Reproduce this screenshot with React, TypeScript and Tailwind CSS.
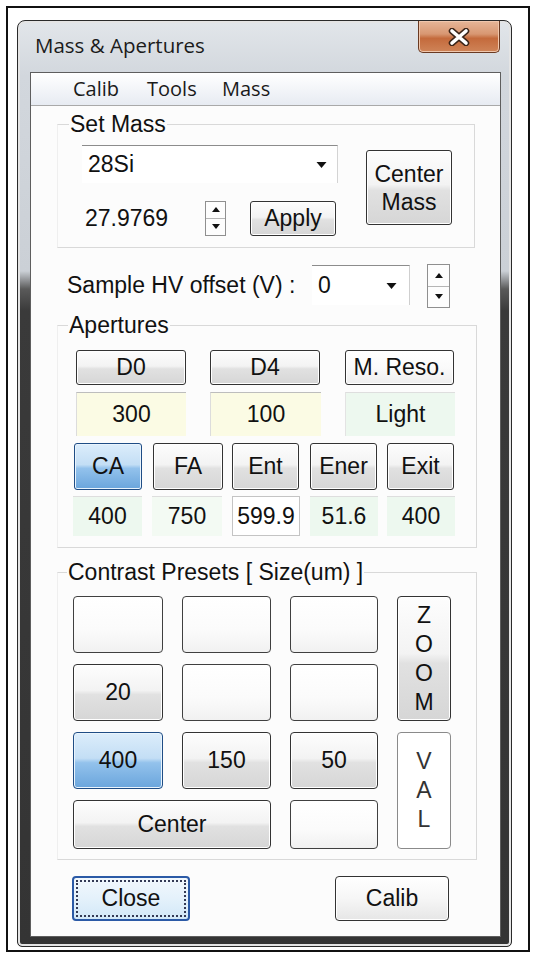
import React from "react";

function Tri({ up = false, w = 11, h = 6 }: { up?: boolean; w?: number; h?: number }) {
  return (
    <svg width={w} height={h} viewBox="0 0 10 6" className="block">
      <path d={up ? "M0 6 L5 0 L10 6Z" : "M0 0 L10 0 L5 6Z"} fill="#111" />
    </svg>
  );
}

function Spinner({ className }: { className: string }) {
  return (
    <div className={"flex flex-col border border-[#8f8f8f] bg-[#fdfdfd] " + className}>
      <div className="flex-1 flex items-center justify-center border-b border-[#b5b5b5]">
        <Tri up w={8} h={5} />
      </div>
      <div className="flex-1 flex items-center justify-center">
        <Tri w={8} h={5} />
      </div>
    </div>
  );
}

const btn =
  "flex items-center justify-center border border-[#333333] rounded-[3px] bg-[linear-gradient(to_bottom,#fdfdfd_0%,#f3f3f3_46%,#e1e1e1_54%,#d6d6d6_100%)] shadow-[inset_0_0_0_1px_#ffffff] text-[23px] text-[#111]";
const blueBtn =
  "flex items-center justify-center border border-[#1f4d85] rounded-[3px] bg-[linear-gradient(to_bottom,#dcedfb_0%,#c3def5_46%,#93c2ec_54%,#6aa5dc_100%)] shadow-[inset_0_0_0_1px_#e9f4fd] text-[23px] text-[#111]";
const emptyBox =
  "border border-[#404040] rounded-[4px] bg-[linear-gradient(to_bottom,#ffffff_0%,#fbfbfb_60%,#f1f1f1_100%)]";
const yellowCell =
  "flex items-center justify-center bg-[#fbfbe4] border-t border-[#bdbdbd] border-l border-l-[#dcdcdc] text-[23px]";
const greenCell =
  "flex items-center justify-center bg-[#edf8ef] border-t border-[#dedede] text-[23px]";
const greyBtn =
  " rounded-[4px] bg-[linear-gradient(to_bottom,#f8f8f8_0%,#efefef_45%,#dadada_55%,#d2d2d2_100%)]";

export default function App() {
  return (
    <div className="w-[535px] h-[960px] bg-white overflow-hidden font-['Liberation_Sans',Arial,sans-serif] text-[#111]">
      <div className="ml-[6px] mt-[6px] w-[524px] h-[946px] border-2 border-[#111] pl-[9px] pt-[12px]">
        <div className="w-[495px] h-[927px] rounded-t-[8px] rounded-b-[5px] border border-[#2a2a2a] bg-[linear-gradient(to_bottom,#e2e6ea_0px,#d2d7dd_55px,#cbd0d6_250px,#5a5a5a_268px,#3a3a3a_290px,#343434_100%)] shadow-[inset_0_0_0_2px_#e4e4e4] flex flex-col pl-[13px] pr-[11px] pb-[10px]">
          {/* Title bar */}
          <div className="h-[52px] flex items-start justify-between">
            <div className="self-center pl-[4px] pb-[3px] text-[20.5px] font-['Open_Sans',sans-serif] text-[#1b1b1b]">
              Mass &amp; Apertures
            </div>
            <div className="w-[82px] h-[32px] rounded-b-[5px] border border-t-0 border-[#6a3a22] bg-[linear-gradient(to_bottom,#e6b698_0%,#d89772_42%,#c46a3c_56%,#cf8458_100%)] shadow-[inset_0_0_0_1px_#f0c7ad] flex items-center justify-center">
              <svg width="22" height="18" viewBox="0 0 22 18">
                <path d="M4 3 L18 15 M18 3 L4 15" stroke="#3a2418" strokeWidth="6.5" strokeLinecap="round" />
                <path d="M4 3 L18 15 M18 3 L4 15" stroke="#ffffff" strokeWidth="3.6" strokeLinecap="round" />
              </svg>
            </div>
          </div>

          {/* Client area */}
          <div className="flex-1 bg-[#fcfcfc] flex flex-col shadow-[0_0_0_1px_#5e5e5e]">
            {/* Menu */}
            <div className="h-[33px] bg-[linear-gradient(to_bottom,#ffffff,#e7ebf2)] border-b border-[#a9a9a9] flex items-center pl-[42px] font-['Open_Sans',sans-serif] text-[20px] text-[#1a1a1a]">
              <span className="w-[74px]">Calib</span>
              <span className="w-[75px]">Tools</span>
              <span>Mass</span>
            </div>

            {/* Set Mass */}
            <fieldset className="ml-[26px] mt-[6px] w-[418px] border border-[#d9d9d9] border-l-[#efefef] pb-[11px]">
              <legend className="ml-[11px] px-[1px] text-[23px] leading-[24px]">Set Mass</legend>
              <div className="flex items-start">
                <div className="ml-[24px] mt-[9px] flex flex-col">
                  <div className="w-[256px] h-[38px] bg-white border-t border-[#8c8c8c] border-r border-r-[#d4d4d4] flex items-center justify-between pl-[6px] pr-[10px] text-[23px]">
                    <span>28Si</span>
                    <Tri />
                  </div>
                  <div className="mt-[17px] h-[36px] flex items-center">
                    <span className="w-[123px] pl-[3px] text-[23px]">27.9769</span>
                    <Spinner className="w-[21px] h-[35px]" />
                    <div className={btn + " ml-[24px] w-[86px] h-[35px]"}>Apply</div>
                  </div>
                </div>
                <div className={btn + " ml-[28px] mt-[14px] w-[86px] h-[75px] flex-col leading-[28px]"}>
                  <span>Center</span>
                  <span>Mass</span>
                </div>
              </div>
            </fieldset>

            {/* Sample HV offset */}
            <div className="mt-[17px] ml-[36px] h-[40px] flex items-start">
              <span className="w-[245px] leading-[40px] text-[23px]">Sample HV offset (V) :</span>
              <div className="w-[98px] h-[40px] bg-white border-t border-[#8c8c8c] border-r border-r-[#cfcfcf] flex items-center justify-between pl-[6px] pr-[12px] text-[23px]">
                <span>0</span>
                <Tri />
              </div>
              <Spinner className="ml-[17px] -mt-[1px] w-[23px] h-[44px]" />
            </div>

            {/* Apertures */}
            <fieldset className="ml-[26px] mt-[8px] w-[420px] border border-[#d9d9d9] border-l-[#efefef] pb-[11px]">
              <legend className="ml-[10px] px-[1px] text-[23px] leading-[24px]">Apertures</legend>
              <div className="mt-[13px] ml-[18px] flex h-[35px]">
                <div className={btn + " w-[110px]"}>D0</div>
                <div className={btn + " ml-[24px] w-[110px]"}>D4</div>
                <div className={btn + " ml-[25px] w-[109px] bg-[linear-gradient(to_bottom,#ffffff_0%,#fafafa_50%,#eeeeee_100%)]"}>M. Reso.</div>
              </div>
              <div className="mt-[7px] ml-[18px] flex h-[44px]">
                <div className={yellowCell + " w-[110px]"}>300</div>
                <div className={yellowCell + " ml-[24px] w-[111px]"}>100</div>
                <div className={greenCell + " ml-[24px] w-[110px] border-l border-l-[#e3e3e3]"}>Light</div>
              </div>
              <div className="mt-[7px] ml-[16px] flex h-[47px]">
                <div className={blueBtn + " w-[68px]"}>CA</div>
                <div className={btn + " ml-[11px] w-[70px]"}>FA</div>
                <div className={btn + " ml-[9px] w-[67px]"}>Ent</div>
                <div className={btn + " ml-[11px] w-[67px]"}>Ener</div>
                <div className={btn + " ml-[10px] w-[67px]"}>Exit</div>
              </div>
              <div className="mt-[6px] ml-[15px] flex h-[40px]">
                <div className={greenCell + " w-[69px]"}>400</div>
                <div className={greenCell + " ml-[10px] w-[70px] bg-[#f3faf3]"}>750</div>
                <div className="ml-[10px] w-[68px] flex items-center justify-center border border-[#c4c4c4] bg-white text-[23px]">599.9</div>
                <div className={greenCell + " ml-[10px] w-[68px]"}>51.6</div>
                <div className={greenCell + " ml-[9px] w-[68px]"}>400</div>
              </div>
            </fieldset>

            {/* Contrast Presets */}
            <fieldset className="ml-[26px] mt-[12px] w-[420px] border border-[#d9d9d9] border-l-[#efefef] pb-[10px]">
              <legend className="ml-[9px] px-[1px] text-[23px] leading-[24px]">Contrast Presets [ Size(um) ]</legend>
              <div className="mt-[12px] ml-[15px] grid grid-cols-[90px_89px_88px_54px] grid-rows-[57px_57px_57px_49px] gap-x-[19px] gap-y-[11px]">
                <div className={emptyBox} />
                <div className={emptyBox} />
                <div className={emptyBox} />
                <div className={btn + " row-span-2 flex-col leading-[29px] rounded-[4px]"}>
                  <span>Z</span>
                  <span>O</span>
                  <span>O</span>
                  <span>M</span>
                </div>
                <div className={btn + greyBtn}>20</div>
                <div className={emptyBox} />
                <div className={emptyBox} />
                <div className={blueBtn + " rounded-[4px]"}>400</div>
                <div className={btn + greyBtn}>150</div>
                <div className={btn + greyBtn}>50</div>
                <div className="row-span-2 flex flex-col items-center justify-center border border-[#8a8a8a] rounded-[4px] bg-white leading-[29px] text-[23px] text-[#333]">
                  <span>V</span>
                  <span>A</span>
                  <span>L</span>
                </div>
                <div className={btn + " col-span-2 rounded-[4px]"}>Center</div>
                <div className={emptyBox} />
              </div>
            </fieldset>

            {/* Bottom buttons */}
            <div className="mt-[16px] flex">
              <div className="ml-[41px] w-[118px] h-[45px] rounded-[4px] border-2 border-[#2b5aa6] bg-[linear-gradient(to_bottom,#f2f8fd_0%,#e4f1fb_50%,#d2e8f8_100%)] p-[2px]">
                <div className="w-full h-full border-2 border-dotted border-[#333a55] flex items-center justify-center text-[23px]">
                  Close
                </div>
              </div>
              <div className={btn + " ml-[145px] w-[114px] h-[45px] rounded-[4px] bg-[linear-gradient(to_bottom,#ffffff_0%,#f6f6f6_50%,#e6e6e6_100%)]"}>
                Calib
              </div>
            </div>
          </div>
        </div>
      </div>
    </div>
  );
}
